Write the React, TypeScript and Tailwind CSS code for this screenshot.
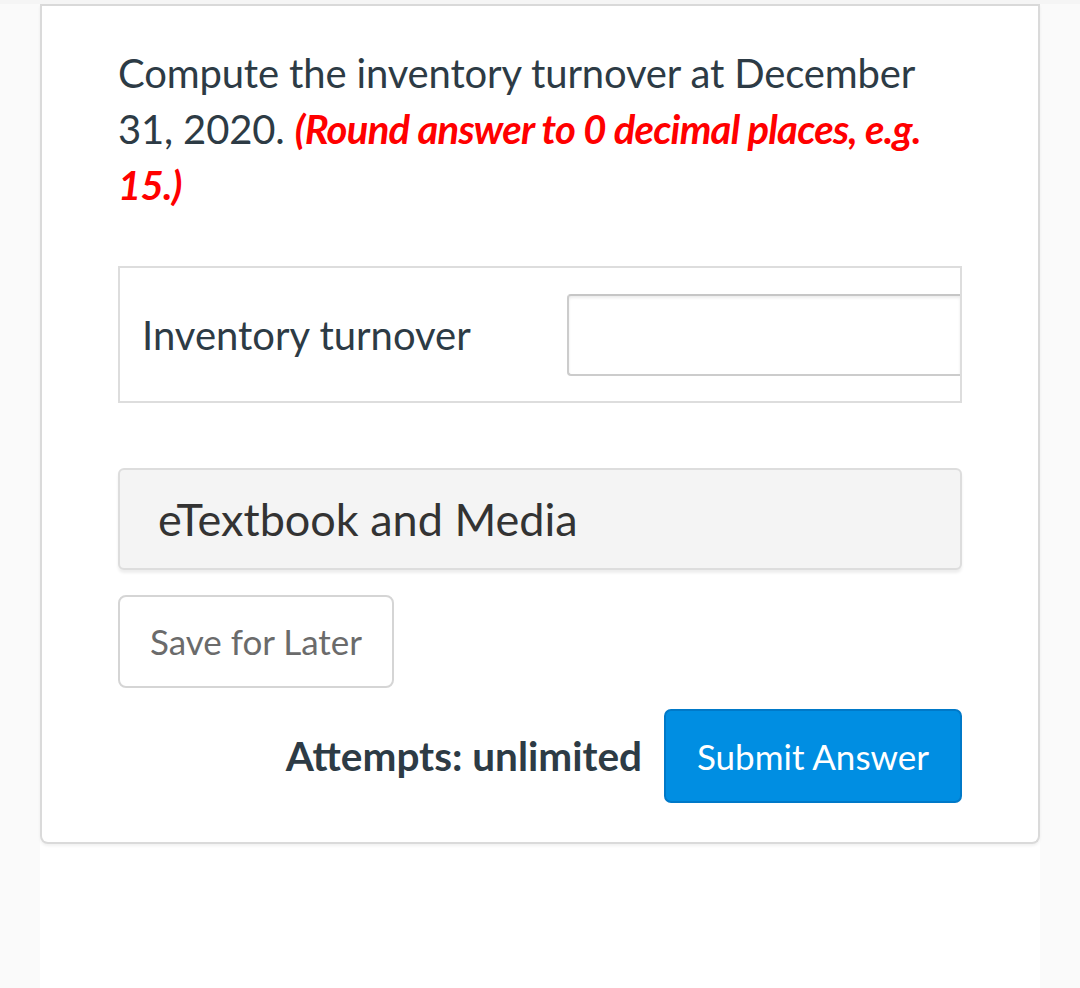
export default function App() {
  return (
    <div className="min-h-[988px] bg-[#fafafa] font-['Lato',sans-serif] text-[#2d3b45]">
      <div className="h-[4px] bg-[#f5f5f5]" />
      <div className="mx-[40px] min-h-[984px] bg-white">
        <div className="rounded-b-[8px] border-x-2 border-b-2 border-t-[2px] border-[#dadada] border-t-[#d9d9d9] bg-white pb-[39px] shadow-[0_2px_3px_rgba(0,0,0,0.06)]">
          <div className="px-[76px] pt-[39px]">
            <p className="text-[40px] leading-[56px] tracking-[-0.15px]">
              Compute the inventory turnover at December 31, 2020.{' '}
              <span className="font-bold italic text-[#ff0000] tracking-[-0.75px]">
                (Round answer to 0 decimal places, e.g. 15.)
              </span>
            </p>

            <div className="mt-[53px] flex h-[137px] items-center border-2 border-[#dddddd] pl-[22px]">
              <span className="w-[425px] text-[40px] leading-none">Inventory turnover</span>
              <input
                type="text"
                className="h-[82px] flex-1 rounded-l-[4px] border-2 border-r-0 border-[#cccccc] border-t-[#c6c6c6] bg-white shadow-[inset_0_2px_3px_rgba(0,0,0,0.08)] outline-none"
              />
            </div>

            <div className="mt-[65px] flex h-[102px] items-center rounded-[6px] border-2 border-[#dddddd] bg-[#f4f4f4] pl-[38px] shadow-[0_3px_3px_rgba(0,0,0,0.07)]">
              <span className="text-[45px] leading-none text-[#333333]">eTextbook and Media</span>
            </div>

            <button className="mt-[25px] flex h-[93px] w-[276px] items-center justify-center rounded-[8px] border-2 border-[#d5d5d5] bg-white text-[35px] text-[#6b6b6b]">
              Save for Later
            </button>

            <div className="mt-[21px] flex items-center justify-end gap-[22px]">
              <span className="text-[40.5px] font-bold leading-none">Attempts: unlimited</span>
              <button className="flex h-[94px] w-[298px] items-center justify-center rounded-[7px] border-2 border-[#0079c8] bg-[#008ee2] text-[35px] text-white">
                Submit Answer
              </button>
            </div>
          </div>
        </div>
      </div>
    </div>
  );
}
